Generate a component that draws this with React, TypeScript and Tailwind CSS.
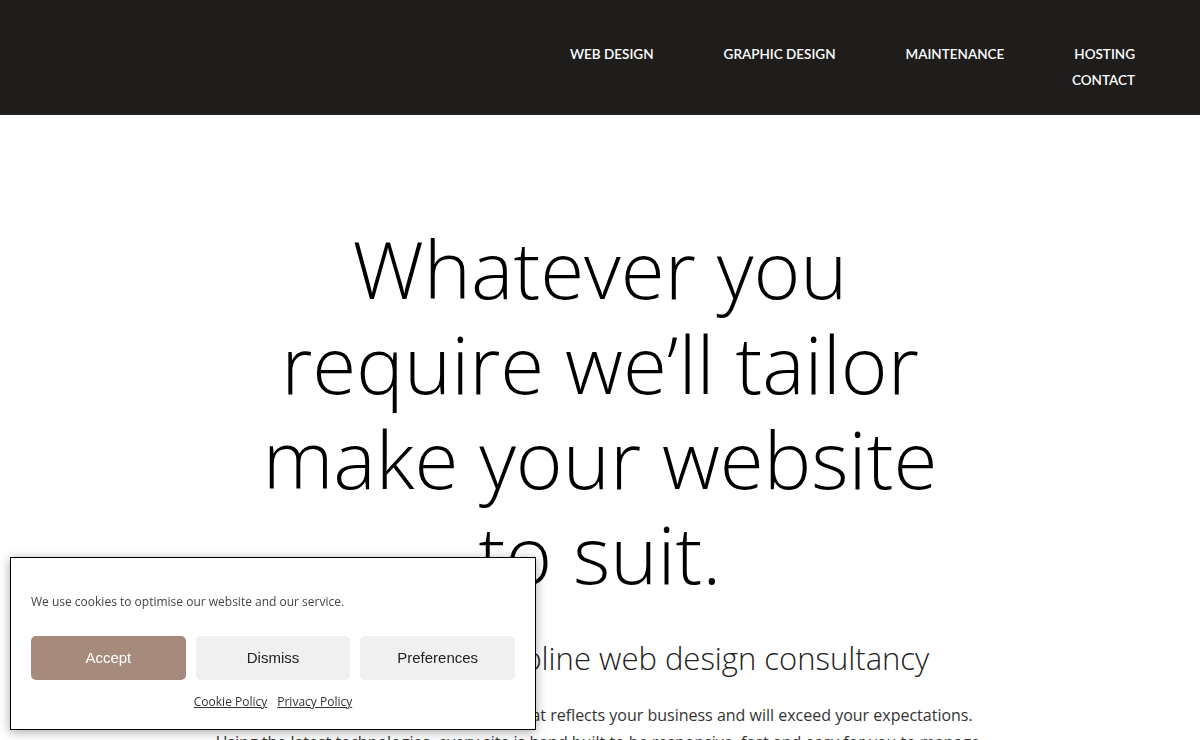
import React from 'react';

const navItems = ['Web Design', 'Graphic Design', 'Maintenance', 'Hosting', 'Contact'];

const CookieBanner: React.FC = () => {
  return (
    <div
      className="fixed left-[10px] bottom-[10px] w-[526px] bg-white border border-black shadow-[0_2px_10px_rgba(0,0,0,0.35)] px-[20px] pt-[35px] pb-[18px]"
      style={{ fontFamily: '"Open Sans", sans-serif' }}
    >
      <p className="text-[12px] leading-[18px] text-[#444]">
        We use cookies to optimise our website and our service.
      </p>
      <div className="mt-[25px] grid grid-cols-3 gap-[10px]">
        <button
          type="button"
          className="h-[44px] rounded-[5px] bg-[#a68b7d] text-white text-[15px]"
          style={{ fontFamily: '"Liberation Sans", Arial, sans-serif' }}
        >
          Accept
        </button>
        <button
          type="button"
          className="h-[44px] rounded-[5px] bg-[#f0f0f0] text-[#222] text-[15px]"
          style={{ fontFamily: '"Liberation Sans", Arial, sans-serif' }}
        >
          Dismiss
        </button>
        <button
          type="button"
          className="h-[44px] rounded-[5px] bg-[#f0f0f0] text-[#222] text-[15px]"
          style={{ fontFamily: '"Liberation Sans", Arial, sans-serif' }}
        >
          Preferences
        </button>
      </div>
      <div className="mt-[13px] flex justify-center gap-[10px] text-[12px] leading-[18px] text-[#333]">
        <a href="#" className="underline">Cookie Policy</a>
        <a href="#" className="underline">Privacy Policy</a>
      </div>
    </div>
  );
};

export default function App() {
  return (
    <div className="min-h-[740px] bg-white overflow-hidden">
      {/* Header */}
      <header className="h-[115px] bg-[#1e1d1b] flex items-start justify-end pr-[65px] pt-[43px]">
        <nav
          className="w-[600px] flex flex-wrap content-start justify-end gap-x-[70px] gap-y-[4px] text-white text-[13.5px] leading-[22px] font-semibold uppercase"
          style={{ fontFamily: 'Lato, "Noto Sans", sans-serif' }}
        >
          {navItems.map((item) => (
            <a key={item} href="#">
              {item}
            </a>
          ))}
        </nav>
      </header>

      {/* Hero */}
      <main
        className="flex flex-col items-center text-center pt-[105px]"
        style={{ fontFamily: '"Open Sans", sans-serif' }}
      >
        <h1 className="max-w-[700px] text-[80px] leading-[95px] font-light text-black">
          Whatever you require we’ll tailor make your website to suit.
        </h1>
        <h2 className="mt-[38px] text-[31px] leading-[40px] font-light text-[#222]">
          We’re a multi-discipline web design consultancy
        </h2>
        <p className="mt-[24px] text-[16px] leading-[27px] text-[#333]">
          We’ll create a unique, modern website that reflects your business and will exceed your expectations.
          <br />
          Using the latest technologies, every site is hand built to be responsive, fast and easy for you to manage.
        </p>
      </main>

      <CookieBanner />
    </div>
  );
}
